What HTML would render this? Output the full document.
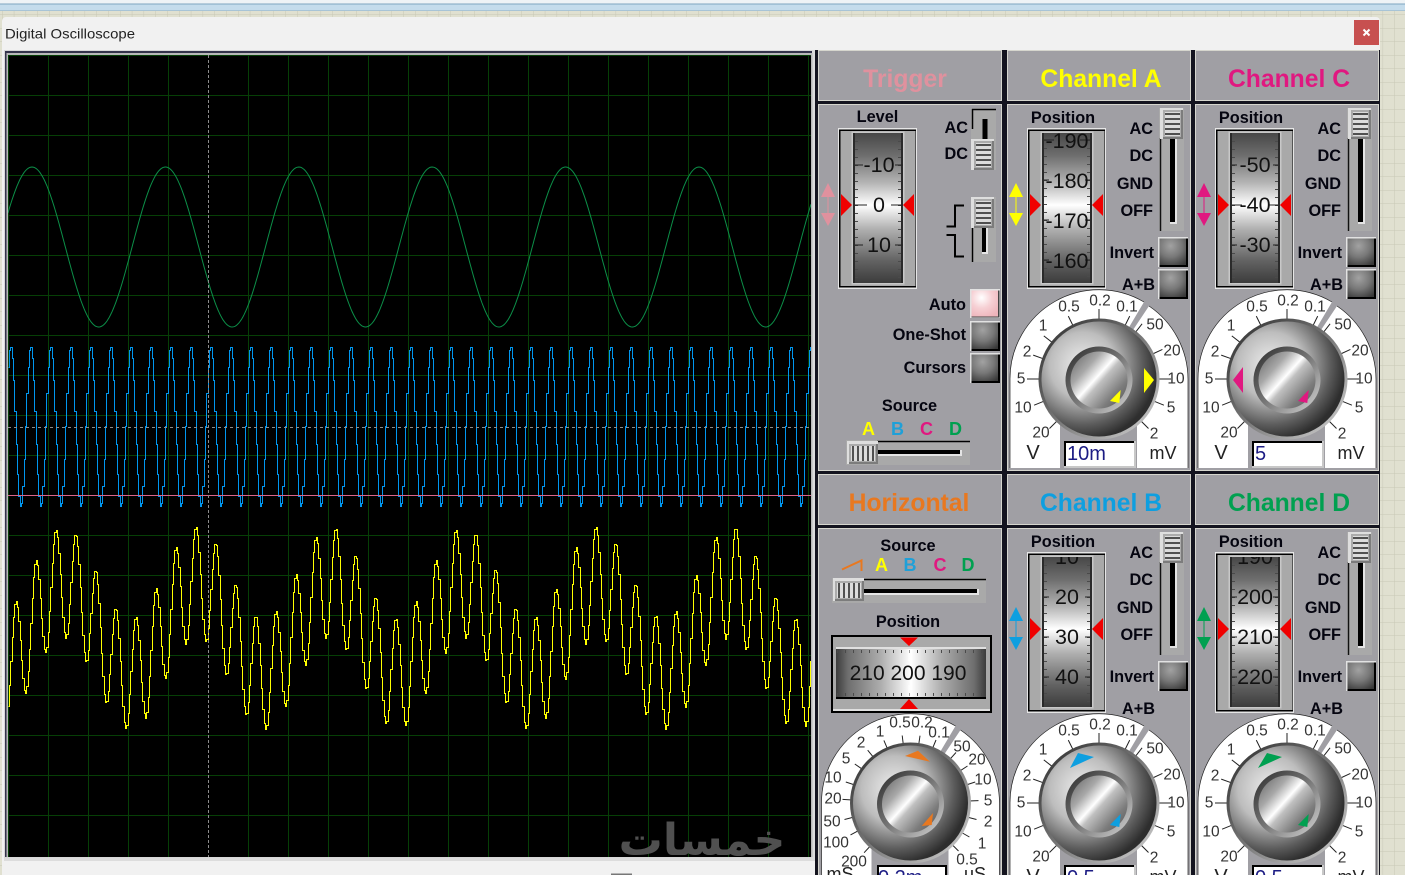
<!DOCTYPE html>
<html><head><meta charset="utf-8"><title>Digital Oscilloscope</title>
<style>
html,body{margin:0;padding:0;background:#e1e1d1;width:1405px;height:875px;overflow:hidden}
svg{display:block;font-family:"Liberation Sans",sans-serif}
.h{font-weight:bold;font-size:24.7px;text-anchor:middle}
.l{font-weight:bold;font-size:16.3px;fill:#050510}
.r{text-anchor:end}.m{text-anchor:middle}
.n{font-size:21.5px;fill:#111;text-anchor:middle}
.d{font-size:15.5px;fill:#333;text-anchor:middle;dominant-baseline:central}
.s{font-weight:bold;font-size:18px;text-anchor:middle}
.u{font-size:20px;fill:#222;text-anchor:middle}
.i{font-size:20px;fill:#1c1c84}
</style></head><body>
<svg xmlns="http://www.w3.org/2000/svg" width="1405" height="875" viewBox="0 0 1405 875">
<defs>
<pattern id="bgp" width="11.8" height="13.5" patternUnits="userSpaceOnUse" x="2" y="1"><rect width="11.8" height="13.5" fill="#e0e0d0"/><path d="M0 0V13.5M0 0H11.8" stroke="#c8c8b6" fill="none"/></pattern>
<linearGradient id="gv" x1="0" y1="0" x2="0" y2="1"><stop offset="0" stop-color="#474747"/><stop offset=".15" stop-color="#6e6e6e"/><stop offset=".33" stop-color="#b4b4b4"/><stop offset=".48" stop-color="#fff"/><stop offset=".64" stop-color="#b0b0b0"/><stop offset=".85" stop-color="#636363"/><stop offset="1" stop-color="#3c3c3c"/></linearGradient>
<linearGradient id="gh" x1="0" y1="0" x2="1" y2="0"><stop offset="0" stop-color="#3c3c3c"/><stop offset=".08" stop-color="#6e6e6e"/><stop offset=".3" stop-color="#aeaeae"/><stop offset=".5" stop-color="#fff"/><stop offset=".7" stop-color="#aeaeae"/><stop offset=".92" stop-color="#6e6e6e"/><stop offset="1" stop-color="#3c3c3c"/></linearGradient>
<radialGradient id="gb" cx=".42" cy=".28" r=".85"><stop offset="0" stop-color="#a2a2a2"/><stop offset=".5" stop-color="#787878"/><stop offset="1" stop-color="#383838"/></radialGradient>
<radialGradient id="gp" cx=".38" cy=".28" r=".8"><stop offset="0" stop-color="#fff"/><stop offset=".5" stop-color="#f6d0d4"/><stop offset="1" stop-color="#eeb4bb"/></radialGradient>
<radialGradient id="gk" cx=".36" cy=".38" r=".72"><stop offset="0" stop-color="#efefef"/><stop offset=".4" stop-color="#bdbdbd"/><stop offset=".72" stop-color="#5c5c5c"/><stop offset=".9" stop-color="#2e2e2e"/><stop offset="1" stop-color="#2c2c2c"/></radialGradient>
<linearGradient id="gr" x1="0" y1="0" x2="1" y2="1"><stop offset="0" stop-color="#2a2a2a"/><stop offset=".5" stop-color="#777"/><stop offset="1" stop-color="#d8d8d8"/></linearGradient>
<linearGradient id="gi" x1="0" y1="0" x2="1" y2="0.9"><stop offset="0" stop-color="#5e5e5e"/><stop offset=".3" stop-color="#a8a8a8"/><stop offset=".48" stop-color="#fff"/><stop offset=".56" stop-color="#c0c0c0"/><stop offset=".8" stop-color="#7c7c7c"/><stop offset="1" stop-color="#5a5a5a"/></linearGradient>
<clipPath id="scr"><rect x="8" y="55" width="803" height="802"/></clipPath>
<clipPath id="cA"><rect x="1044" y="133" width="46" height="150"/></clipPath>
<clipPath id="cB"><rect x="1044" y="557" width="46" height="150"/></clipPath>
<clipPath id="cD"><rect x="1232" y="557" width="46" height="150"/></clipPath>

<g id="btn"><rect width="30" height="30" fill="#e2e2e2"/><rect x="1.5" y="1.5" width="28.5" height="28.5" fill="#000"/><rect x="1.5" y="1.5" width="26.5" height="26.5" fill="url(#gb)"/></g>

<g id="thV"><rect width="23" height="31" fill="#dedede"/><rect x="3" y="2" width="20" height="29" fill="#7c7c7c"/><rect x="3" y="2" width="18" height="27" fill="#ababab"/><rect x="5" y="4" width="15" height="24" fill="#dcdcdc"/><path d="M5 6H20M5 11H20M5 16H20M5 21H20M5 26H20" stroke="#505050" stroke-width="2"/></g>
<g id="thH"><rect width="31" height="23" fill="#dedede"/><rect x="2" y="3" width="29" height="20" fill="#7c7c7c"/><rect x="2" y="3" width="27" height="18" fill="#ababab"/><rect x="4" y="5" width="24" height="15" fill="#dcdcdc"/><path d="M6 5V20M11 5V20M16 5V20M21 5V20M26 5V20" stroke="#505050" stroke-width="2"/></g>

<g id="vs">
<rect x="1027" y="128" width="79" height="161" fill="#e6e6e6"/>
<rect x="1028" y="129.500" width="77" height="158" fill="#000"/>
<rect x="1029.500" y="131" width="75" height="155" fill="#a9a9a9"/>
<rect x="1040.500" y="131.500" width="53" height="153" fill="#c8c8c8"/>
<rect x="1042" y="133" width="50" height="150" fill="url(#gv)"/>
<path d="M1043 133V283M1091 133V283" stroke="#2a2a2a" stroke-width="2"/>
<path d="M1030 194V216L1041 205ZM1103 194V216L1092 205Z" fill="#f00000"/>
</g>

<path id="tk0" d="M1045.500 133V283M1088.500 133V283" fill="none" stroke="#4a4a4a" stroke-width="3" stroke-dasharray="1 7"/>
<path id="tk1" d="M1045.500 133V283M1088.500 133V283" fill="none" stroke="#4a4a4a" stroke-width="3" stroke-dasharray="1 7" stroke-dashoffset="1"/>

<g id="dial">
<path d="M-89 89V0A89 89 0 0 1 45 -77L29 -50L-39 40V89ZM50 -73A89 89 0 0 1 89 0V89H38V40L34 -49Z" fill="#fff"/>
<path d="M-89 89V0A89 89 0 0 1 45 -77M50 -73A89 89 0 0 1 89 0V89" fill="none" stroke="#222" stroke-width=".7"/>
</g>
<path id="dt" fill="none" stroke="#222" stroke-width="1" d="M25.400 -52.100L30.700 -62.900M-25.400 -52.100L-30.700 -62.900M0 -58V-70M-45.700 -35.700L-55.200 -43.100M-54.500 -19.800L-65.800 -23.900M-58 0H-72M-53.800 21.700L-64.900 26.200M-41 41L-49.500 49.500M35.700 -45.700L43.100 -55.200M52.500 -24.500L63.400 -29.600M58 0H72M53.800 21.700L64.900 26.200M41 41L49.500 49.500"/>
<g id="knob">
<circle r="60.500" fill="url(#gr)"/>
<circle r="57.500" fill="url(#gk)"/>
<circle cy="1" r="33.500" fill="url(#gr)"/>
<circle cy="1" r="28.500" fill="url(#gi)"/>
</g>

<g id="ch">
<use href="#vs"/>
<rect x="1159" y="108" width="25" height="123" fill="#a9a9a9"/>
<path d="M1160.500 138V231" stroke="#111" stroke-width="1.500"/>
<rect x="1175" y="138" width="2" height="86" fill="#e4e4e4"/><rect x="1170" y="222" width="7" height="2" fill="#e4e4e4"/>
<rect x="1170" y="138" width="5" height="84" fill="#000"/>
<use href="#thV" x="1160" y="108"/>
<use href="#btn" x="1158" y="237"/>
<g transform="translate(1099 379)"><use href="#dial"/><use href="#dt"/><use href="#knob"/></g>
<rect x="1064" y="441" width="72" height="27" fill="#c8c8c8"/>
<rect x="1064" y="441" width="70" height="25" fill="#000"/>
<rect x="1066" y="443" width="68" height="23" fill="#fff"/>
</g>
</defs>

<rect width="1405" height="875" fill="url(#bgp)"/>
<rect y="0" width="1405" height="3.500" fill="#eef3f6"/>
<rect y="3.500" width="1405" height="1" fill="#7ea6c0"/>
<rect y="4.500" width="1405" height="6" fill="#c4dcec"/>
<rect y="10" width="1405" height="1" fill="#a8c4d6"/>

<!-- window -->
<rect x="2" y="17" width="1378" height="870" rx="4" fill="#f1f1f1"/>
<text x="5" y="38.500" font-size="14" fill="#222" textLength="130" lengthAdjust="spacingAndGlyphs">Digital Oscilloscope</text>
<rect x="1354" y="20" width="25" height="25" fill="#c75050"/>
<path d="M1363.500 29.500L1369.500 35.500M1369.500 29.500L1363.500 35.500" stroke="#fff" stroke-width="2"/>
<rect x="611" y="873.500" width="21" height="2" fill="#777"/>

<!-- scope -->
<rect x="4" y="50" width="811" height="811" fill="#dcdcdc"/>
<rect x="4" y="50" width="808" height="808" fill="#d8d8d8"/>
<rect x="5" y="51" width="807" height="806" fill="#33334a"/>
<rect x="6.500" y="53" width="806" height="804" fill="#b8b8b8"/>
<rect x="8" y="55" width="803" height="802" fill="#000"/>
<g clip-path="url(#scr)">
<g stroke="#063f06" stroke-width="1" fill="none">
<path d="M8.500 55V857M48.500 55V857M88.500 55V857M128.500 55V857M168.500 55V857M248.500 55V857M288.500 55V857M328.500 55V857M368.500 55V857M408.500 55V857M448.500 55V857M488.500 55V857M528.500 55V857M568.500 55V857M608.500 55V857M648.500 55V857M688.500 55V857M728.500 55V857M768.500 55V857M808.500 55V857"/>
<path d="M8 55.500H811M8 95.500H811M8 135.500H811M8 175.500H811M8 215.500H811M8 255.500H811M8 295.500H811M8 335.500H811M8 375.500H811M8 415.500H811M8 455.500H811M8 495.500H811M8 535.500H811M8 575.500H811M8 615.500H811M8 655.500H811M8 695.500H811M8 735.500H811M8 775.500H811M8 815.500H811"/>
</g>
<text x="702" y="855" font-family="'DejaVu Sans',sans-serif" font-weight="bold" font-size="44" fill="#505050" text-anchor="middle" direction="rtl">خمسات</text>
<path id="wg" fill="none" stroke="#0c8f48" stroke-width="1"/>
<path id="wb" fill="none" stroke="#0096ee" stroke-width="1"/>
<path d="M8 495.500H811" stroke="#d8648a" stroke-width="1"/>
<path id="wy" fill="none" stroke="#ffff00" stroke-width="1"/>
<path d="M8 427.500H811" stroke="#8c8c8c" stroke-width="1" stroke-dasharray="3 3"/>
<path d="M208.500 55V857" stroke="#8c8c8c" stroke-width="1" stroke-dasharray="3 2"/>
</g>

<!-- panels -->
<rect x="815" y="50" width="565" height="825" fill="#14141f"/>
<g fill="#a09fa4" stroke="#d6d6ce" stroke-width="1">
<rect x="818.500" y="50.500" width="183" height="50"/>
<rect x="1007.500" y="50.500" width="183" height="50"/>
<rect x="1195.500" y="50.500" width="183" height="50"/>
<rect x="818.500" y="104.500" width="183" height="366"/>
<rect x="1007.500" y="104.500" width="183" height="366"/>
<rect x="1195.500" y="104.500" width="183" height="366"/>
<rect x="818.500" y="474.500" width="183" height="50"/>
<rect x="1007.500" y="474.500" width="183" height="50"/>
<rect x="1195.500" y="474.500" width="183" height="50"/>
<rect x="818.500" y="528.500" width="183" height="360"/>
<rect x="1007.500" y="528.500" width="183" height="360"/>
<rect x="1195.500" y="528.500" width="183" height="360"/>
</g>

<text class="h" x="905" y="87" fill="#e0919e">Trigger</text>
<text class="h" x="1101" y="87" fill="#ffff00">Channel A</text>
<text class="h" x="1289" y="87" fill="#e01880">Channel C</text>
<text class="h" x="909" y="511" fill="#e87820">Horizontal</text>
<text class="h" x="1101" y="511" fill="#0e9fe0">Channel B</text>
<text class="h" x="1289" y="511" fill="#00a050">Channel D</text>

<!-- Trigger -->
<text class="l m" x="877.500" y="122">Level</text>
<use href="#vs" x="-189"/>
<use href="#tk0" x="-189"/>
<path d="M855 165h8M895 165h8M855 205h12M891 205h12M855 245h8M895 245h8" stroke="#222" fill="none"/>
<text class="n" x="879" y="172">-10</text>
<text class="n" x="879" y="212">0</text>
<text class="n" x="879" y="252">10</text>
<path d="M828 183L835 197H821ZM828 226L835 213H821Z M827.500 197h1v16h-1Z" fill="#e0919e"/>
<text class="l r" x="968" y="133">AC</text>
<text class="l r" x="968" y="159">DC</text>
<rect x="971" y="108" width="25" height="62" fill="#a9a9a9"/>
<path d="M972.500 129V109.500H996" fill="none" stroke="#000" stroke-width="1.500"/>
<rect x="982.500" y="119" width="5" height="21" fill="#000"/>
<use href="#thV" x="971" y="139"/>
<rect x="971" y="197" width="25" height="65" fill="#a9a9a9"/>
<rect x="982" y="228" width="6" height="26" fill="#e4e4e4"/>
<rect x="982" y="228" width="4" height="24" fill="#000"/>
<path d="M972.500 228V262" stroke="#000" stroke-width="1.500"/>
<use href="#thV" x="971" y="197"/>
<path d="M946.500 226.500H955V205.500H964M946.500 235H955V256.500H964" fill="none" stroke="#000" stroke-width="2"/>
<text class="l r" x="966" y="310">Auto</text>
<text class="l r" x="966" y="340">One-Shot</text>
<text class="l r" x="966" y="373">Cursors</text>
<rect x="970" y="289" width="30" height="29" fill="#e2e2e2"/><rect x="971.500" y="290.500" width="28" height="27" fill="#444"/><rect x="971.500" y="290.500" width="26.500" height="26" fill="url(#gp)"/>
<use href="#btn" x="970" y="321"/>
<use href="#btn" x="970" y="353"/>
<text class="l m" x="909.500" y="411">Source</text>
<text class="s" x="868.500" y="435" fill="#ffff00">A</text>
<text class="s" x="897.500" y="435" fill="#1fa0d8">B</text>
<text class="s" x="926.500" y="435" fill="#e01880">C</text>
<text class="s" x="955.500" y="435" fill="#00a050">D</text>
<rect x="846" y="440" width="124" height="25" fill="#a9a9a9"/>
<path d="M877 441.500H970" stroke="#000" stroke-width="1.500"/>
<rect x="877" y="450" width="85" height="6" fill="#e4e4e4"/>
<rect x="877" y="450" width="83" height="4" fill="#000"/>
<use href="#thH" x="847" y="441"/>

<!-- Channel A -->
<use href="#ch"/>
<use href="#tk1"/>
<use href="#btn" x="1158" y="269"/>
<path d="M1044 140h10M1080 140h10M1044 180h5M1085 180h5M1044 220h5M1085 220h5M1044 260h5M1085 260h5" stroke="#222" fill="none"/>
<g clip-path="url(#cA)">
<text class="n" x="1067" y="148">-190</text>
<text class="n" x="1067" y="188">-180</text>
<text class="n" x="1067" y="228">-170</text>
<text class="n" x="1067" y="268">-160</text>
</g>
<text class="l m" x="1063" y="123">Position</text>
<path d="M1016 183L1023 197H1009ZM1016 226L1023 213H1009Z M1015.500 197h1v16h-1Z" fill="#ffff00"/>
<text class="l r" x="1153" y="134">AC</text>
<text class="l r" x="1153" y="161">DC</text>
<text class="l r" x="1153" y="189">GND</text>
<text class="l r" x="1153" y="216">OFF</text>
<text class="l r" x="1154" y="258">Invert</text>
<text class="l r" x="1155" y="290">A+B</text>
<text class="d" x="1069" y="307">0.5</text><text class="d" x="1100" y="301">0.2</text><text class="d" x="1127" y="307">0.1</text>
<text class="d" x="1043" y="326">1</text><text class="d" x="1027" y="352">2</text><text class="d" x="1021" y="379">5</text><text class="d" x="1023" y="408">10</text><text class="d" x="1041" y="433">20</text>
<text class="d" x="1155" y="325">50</text><text class="d" x="1172" y="351">20</text><text class="d" x="1176" y="379">10</text><text class="d" x="1171" y="408">5</text><text class="d" x="1154" y="434">2</text>
<text class="u" x="1033" y="459">V</text>
<text class="u" x="1163" y="459" style="font-size:18px">mV</text>
<text class="i" x="1067" y="460">10m</text>
<path d="M1144 368L1154 380L1144 393ZM1110 401L1120.700 390L1119.300 403Z" fill="#ffff00"/>

<!-- Channel C -->
<use href="#ch" x="188"/>
<use href="#tk0" x="188"/>
<use href="#btn" x="1346" y="269"/>
<path d="M1232 165h5M1273 165h5M1232 205h10M1268 205h10M1232 245h5M1273 245h5" stroke="#222" fill="none"/>
<text class="n" x="1255" y="172">-50</text>
<text class="n" x="1255" y="212">-40</text>
<text class="n" x="1255" y="252">-30</text>
<text class="l m" x="1251" y="123">Position</text>
<path d="M1204 183L1211 197H1197ZM1204 226L1211 213H1197Z M1203.500 197h1v16h-1Z" fill="#e01880"/>
<text class="l r" x="1341" y="134">AC</text>
<text class="l r" x="1341" y="161">DC</text>
<text class="l r" x="1341" y="189">GND</text>
<text class="l r" x="1341" y="216">OFF</text>
<text class="l r" x="1342" y="258">Invert</text>
<text class="l r" x="1343" y="290">A+B</text>
<text class="d" x="1257" y="307">0.5</text><text class="d" x="1288" y="301">0.2</text><text class="d" x="1315" y="307">0.1</text>
<text class="d" x="1231" y="326">1</text><text class="d" x="1215" y="352">2</text><text class="d" x="1209" y="379">5</text><text class="d" x="1211" y="408">10</text><text class="d" x="1229" y="433">20</text>
<text class="d" x="1343" y="325">50</text><text class="d" x="1360" y="351">20</text><text class="d" x="1364" y="379">10</text><text class="d" x="1359" y="408">5</text><text class="d" x="1342" y="434">2</text>
<text class="u" x="1221" y="459">V</text>
<text class="u" x="1351" y="459" style="font-size:18px">mV</text>
<text class="i" x="1255" y="460">5</text>
<path d="M1243 367L1233 380L1243 393ZM1298 401L1308.700 390L1307.300 403Z" fill="#e01880"/>

<!-- Horizontal -->
<text class="l m" x="908" y="551">Source</text>
<path d="M842 569.500L861.500 560.500V571" fill="none" stroke="#e87820" stroke-width="2"/>
<text class="s" x="881.500" y="571" fill="#ffff00">A</text>
<text class="s" x="910" y="571" fill="#1fa0d8">B</text>
<text class="s" x="940" y="571" fill="#e01880">C</text>
<text class="s" x="968" y="571" fill="#00a050">D</text>
<rect x="832" y="578" width="154" height="25" fill="#a9a9a9"/>
<path d="M864 579.500H986" stroke="#000" stroke-width="1.500"/>
<rect x="864" y="589" width="115" height="6" fill="#e4e4e4"/>
<rect x="864" y="589" width="113" height="4" fill="#000"/>
<use href="#thH" x="833" y="578"/>
<text class="l m" x="908" y="627">Position</text>
<rect x="831" y="635" width="161" height="78" fill="#000"/>
<rect x="833" y="637" width="157" height="74" fill="#a9a9a9"/>
<rect x="833" y="709" width="157" height="2" fill="#e0e0e0"/>
<rect x="836" y="647" width="150" height="2" fill="#e0e0e0"/>
<rect x="836" y="649" width="150" height="48" fill="url(#gh)"/>
<rect x="836" y="697" width="150" height="2" fill="#000"/>
<path d="M837 651.500H986M837 694.500H986" fill="none" stroke="#4a4a4a" stroke-width="3" stroke-dasharray="1 7"/>
<path d="M909 649v12M909 685v12" stroke="#fff"/>
<path d="M900 637.500H918L909 646ZM900 709H918L909 699Z" fill="#f00000"/>
<text class="n" x="908" y="680" style="font-size:21px">210 200 190</text>
<g transform="translate(910.500 803)"><use href="#dial"/>
<path fill="none" stroke="#222" stroke-width="1" d="M-7.100 -57.600L-8.300 -67.500M8.100 -57.400L9.500 -67.300M21.700 -53.800L25.500 -63M-22.700 -53.400L-26.600 -62.600M-36.500 -45.100L-42.800 -52.800M-47.500 -33.300L-55.700 -39M-55.200 -17.900L-64.700 -21M-58 -3L-68 -3.600M-56.300 14L-66 16.500M-51.200 27.200L-60 31.900M-39.600 42.400L-46.400 49.700M38.800 -43.100L45.500 -50.500M48.700 -31.600L57 -37M55.200 -17.900L64.700 -21M58 -2L68 -2.400M56.300 14L66 16.500M50.200 29L58.900 34M41 41L48 48"/>
<use href="#knob"/></g>
<text class="d" x="900" y="723">0.5</text><text class="d" x="922" y="723">0.2</text><text class="d" x="939" y="733">0.1</text>
<text class="d" x="880" y="732">1</text><text class="d" x="861" y="743">2</text><text class="d" x="846" y="759">5</text><text class="d" x="833" y="778">10</text><text class="d" x="833" y="799">20</text><text class="d" x="832" y="822">50</text><text class="d" x="836" y="843">100</text><text class="d" x="854" y="862">200</text>
<text class="d" x="962" y="747">50</text><text class="d" x="977" y="760">20</text><text class="d" x="983" y="780">10</text><text class="d" x="988" y="801">5</text><text class="d" x="988" y="822">2</text><text class="d" x="982" y="844">1</text><text class="d" x="967" y="860">0.5</text>
<text class="u" x="840" y="880" style="font-size:18px">mS</text>
<text class="u" x="975" y="880" style="font-size:18px">uS</text>
<rect x="877" y="865" width="70" height="20" fill="#000"/><rect x="879" y="867" width="66" height="20" fill="#fff"/>
<text class="i" x="878" y="884">0.2m</text>
<path d="M905 756L918 750.700L930 761.700ZM921.700 826L933 813L931.700 825Z" fill="#e87820"/>

<!-- Channel B -->
<use href="#ch" y="424"/>
<use href="#tk0" y="424"/>
<path d="M1044 597h5M1085 597h5M1044 637h5M1085 637h5M1044 677h5M1085 677h5" stroke="#222" fill="none"/>
<g clip-path="url(#cB)">
<text class="n" x="1067" y="564">10</text>
<text class="n" x="1067" y="604">20</text>
<text class="n" x="1067" y="644">30</text>
<text class="n" x="1067" y="684">40</text>
</g>
<text class="l m" x="1063" y="547">Position</text>
<path d="M1016 607L1023 621H1009ZM1016 650L1023 637H1009Z M1015.500 621h1v16h-1Z" fill="#0e9fe0"/>
<text class="l r" x="1153" y="558">AC</text>
<text class="l r" x="1153" y="585">DC</text>
<text class="l r" x="1153" y="613">GND</text>
<text class="l r" x="1153" y="640">OFF</text>
<text class="l r" x="1154" y="682">Invert</text>
<text class="l r" x="1155" y="714">A+B</text>
<text class="d" x="1069" y="731">0.5</text><text class="d" x="1100" y="725">0.2</text><text class="d" x="1127" y="731">0.1</text>
<text class="d" x="1043" y="750">1</text><text class="d" x="1027" y="776">2</text><text class="d" x="1021" y="803">5</text><text class="d" x="1023" y="832">10</text><text class="d" x="1041" y="857">20</text>
<text class="d" x="1155" y="749">50</text><text class="d" x="1172" y="775">20</text><text class="d" x="1176" y="803">10</text><text class="d" x="1171" y="832">5</text><text class="d" x="1154" y="858">2</text>
<text class="u" x="1033" y="883">V</text>
<text class="u" x="1163" y="883" style="font-size:18px">mV</text>
<text class="i" x="1067" y="884">0.5</text>
<path d="M1070 768L1078 753L1094 757ZM1110 825L1120.700 814L1119.300 827Z" fill="#0e9fe0"/>

<!-- Channel D -->
<use href="#ch" x="188" y="424"/>
<use href="#tk0" x="188" y="424"/>
<path d="M1232 597h5M1273 597h5M1232 637h5M1273 637h5M1232 677h5M1273 677h5" stroke="#222" fill="none"/>
<g clip-path="url(#cD)">
<text class="n" x="1255" y="564">190</text>
<text class="n" x="1255" y="604">200</text>
<text class="n" x="1255" y="644">210</text>
<text class="n" x="1255" y="684">220</text>
</g>
<text class="l m" x="1251" y="547">Position</text>
<path d="M1204 607L1211 621H1197ZM1204 650L1211 637H1197Z M1203.500 621h1v16h-1Z" fill="#00a050"/>
<text class="l r" x="1341" y="558">AC</text>
<text class="l r" x="1341" y="585">DC</text>
<text class="l r" x="1341" y="613">GND</text>
<text class="l r" x="1341" y="640">OFF</text>
<text class="l r" x="1342" y="682">Invert</text>
<text class="l r" x="1343" y="714">A+B</text>
<text class="d" x="1257" y="731">0.5</text><text class="d" x="1288" y="725">0.2</text><text class="d" x="1315" y="731">0.1</text>
<text class="d" x="1231" y="750">1</text><text class="d" x="1215" y="776">2</text><text class="d" x="1209" y="803">5</text><text class="d" x="1211" y="832">10</text><text class="d" x="1229" y="857">20</text>
<text class="d" x="1343" y="749">50</text><text class="d" x="1360" y="775">20</text><text class="d" x="1364" y="803">10</text><text class="d" x="1359" y="832">5</text><text class="d" x="1342" y="858">2</text>
<text class="u" x="1221" y="883">V</text>
<text class="u" x="1351" y="883" style="font-size:18px">mV</text>
<text class="i" x="1255" y="884">0.5</text>
<path d="M1258 768L1267 753L1282 757ZM1298 825L1308.700 814L1307.300 827Z" fill="#00a050"/>
</svg>
<script>
(function(){
var T=2*Math.PI,P=133.4;
function mk(f){
  var st=4/3,k,x,px,d='M8.5 '+(Math.floor(f(8))+.5);
  for(k=1;k<=603;k++){
    x=8+k*st;
    px=Math.floor(x)+.5;
    d+=' H'+px+' V'+(Math.floor(f(x))+.5);
  }
  return d;
}
function sm(f){
  var d='M8 '+f(8).toFixed(1),x;
  for(x=9;x<=811;x+=1){d+=' L'+x+' '+f(x).toFixed(1);}
  return d;
}
document.getElementById('wg').setAttribute('d',sm(function(x){return 247-80*Math.cos(T*(x-32)/P);}));
document.getElementById('wb').setAttribute('d',mk(function(x){return 427.3-80*Math.cos(T*(x-10.3)/20);}));
document.getElementById('wy').setAttribute('d',mk(function(x){return 628.5-46*Math.cos(T*(x-63)/P)-55.5*Math.cos(T*(x-15.5)/20);}));
})();
</script>
</body></html>
